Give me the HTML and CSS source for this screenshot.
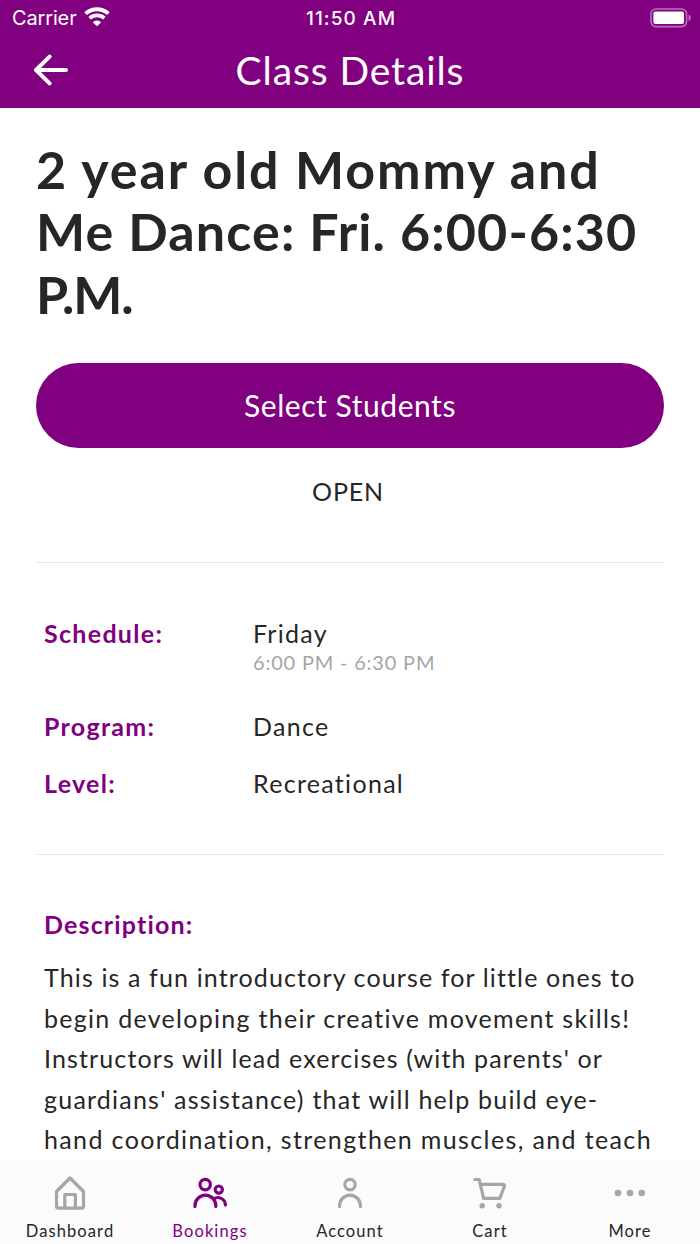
FILE: index.html
```html
<!DOCTYPE html>
<html lang="en">
  <head>
    <meta charset="UTF-8" />
    <meta name="viewport" content="width=device-width, initial-scale=1.0" />
    <title>Class Details</title>
    <link rel="stylesheet" href="styles.css">
  </head>
  <body>
    <header class="header">
      <div class="status-bar">
        <div class="carrier">
          <span>Carrier</span>
          <svg class="wifi" width="26" height="20" viewBox="0 0 26 20" fill="none" stroke="#fff">
            <path d="M1.6 6.6a16.8 16.8 0 0 1 22.8 0" stroke-width="4" />
            <path d="M5.6 11.2a11 11 0 0 1 14.8 0" stroke-width="3.6" />
            <path d="M13 19.2l-4.2-4a6 6 0 0 1 8.4 0z" fill="#fff" stroke="none" />
          </svg>
        </div>
        <div class="time">11:50 AM</div>
        <svg class="battery" width="42" height="20" viewBox="0 0 42 20">
          <rect x="1" y="1" width="35.6" height="17.6" rx="5" fill="none" stroke="#fff" stroke-opacity=".45" stroke-width="1.6" />
          <rect x="3.4" y="3.6" width="30.6" height="12.4" rx="2" fill="#fff" />
          <path d="M38.6 6.6c2.8 1.2 2.8 5.4 0 6.6z" fill="#fff" fill-opacity=".5" />
        </svg>
      </div>
      <div class="nav-bar">
        <a href="#" class="back" aria-label="Back">
          <svg width="38" height="32" viewBox="0 0 38 32" fill="none" stroke="#fff" stroke-width="4" stroke-linecap="round" stroke-linejoin="round">
            <path d="M17.6 2.6L4 16l13.6 13.4M4 16h30" />
          </svg>
        </a>
        <div class="nav-title">Class Details</div>
      </div>
    </header>

    <main class="content">
      <h1>
        <span class="title-name">2 year old Mommy and</span>
        <span class="title-time">Me Dance: Fri. 6:00-6:30</span>
        <span class="title-end">P.M.</span>
      </h1>
      <button class="select-button">Select Students</button>
      <div class="status">OPEN</div>

      <dl class="details">
        <div class="row row-schedule">
          <dt>Schedule:</dt>
          <dd>Friday<span class="hours">6:00 PM - 6:30 PM</span></dd>
        </div>
        <div class="row">
          <dt>Program:</dt>
          <dd>Dance</dd>
        </div>
        <div class="row">
          <dt>Level:</dt>
          <dd>Recreational</dd>
        </div>
      </dl>

      <section class="description">
        <h2>Description:</h2>
        <p>
          This is a fun introductory course for little ones to<br>
          <span class="wide">begin developing their creative movement skills!</span><br>
          Instructors will lead exercises (with parents' or<br>
          <span class="medium">guardians' assistance) that will help build eye-</span><br>
          <span class="wider">hand coordination, strengthen muscles, and teach</span>
        </p>
      </section>
    </main>

    <nav class="tab-bar">
      <a href="#" class="tab">
        <svg width="40" height="40" viewBox="0 0 40 40">
          <path d="M6.5 16.5L20 3l13.500 13.500V31.200a2 2 0 0 1-2 2H8.500a2 2 0 0 1-2-2zM14.800 33V19.500h10.600V33" />
        </svg>
        <span>Dashboard</span>
      </a>
      <a href="#" class="tab active">
        <svg width="40" height="40" viewBox="0 0 40 40">
          <circle cx="15.200" cy="9.600" r="5.200" />
          <circle cx="28.800" cy="14.600" r="3.600" />
          <path d="M5 31.600v-1a10.400 10.400 0 0 1 20.800 0v1M23.400 24.200a7.400 7.400 0 0 1 12 5.800" />
        </svg>
        <span>Bookings</span>
      </a>
      <a href="#" class="tab">
        <svg width="40" height="40" viewBox="0 0 40 40">
          <circle cx="20" cy="9.600" r="5.200" />
          <path d="M9.600 31.600v-1a10.400 10.400 0 0 1 20.800 0v1" />
        </svg>
        <span>Account</span>
      </a>
      <a href="#" class="tab">
        <svg width="40" height="40" viewBox="0 0 40 40">
          <path d="M4.800 4.500h4.400L13.600 23.400h16.200L34.400 11.400q.6-2-1.600-2H10.400" />
          <circle class="dot" cx="12.200" cy="30.800" r="2.700" />
          <circle class="dot" cx="29" cy="30.800" r="2.700" />
        </svg>
        <span>Cart</span>
      </a>
      <a href="#" class="tab">
        <svg width="40" height="40" viewBox="0 0 40 40">
          <circle class="dot" cx="8" cy="18" r="3.300" />
          <circle class="dot" cx="20" cy="18" r="3.300" />
          <circle class="dot" cx="31.700" cy="18" r="3.300" />
        </svg>
        <span>More</span>
      </a>
    </nav>
  </body>
</html>
```

FILE: styles.css
```css
* {
  box-sizing: border-box;
}
body {
  display: flex;
  flex-direction: column;
  height: 1244px;
  margin: 0;
  overflow: hidden;
  font-family: Lato, sans-serif;
  color: #262626;
  background: #fff;
}
svg {
  display: block;
}
.header {
  flex: none;
  height: 108px;
  background: #800080;
  color: #fff;
}
.status-bar {
  display: grid;
  grid-template-columns: 1fr auto 1fr;
  align-items: center;
  height: 36px;
  padding: 0 8px 0 12px;
  font-family: Inter, sans-serif;
  font-size: 20px;
}
.carrier {
  display: flex;
  align-items: center;
  gap: 7px;
  letter-spacing: -0.15px;
}
.wifi {
  margin-top: -3px;
}
.time {
  padding-right: 2px;
  font-size: 19px;
  font-weight: 500;
  letter-spacing: 1.1px;
}
.battery {
  justify-self: end;
  margin-top: -1px;
}
.nav-bar {
  display: grid;
  grid-template-columns: 38px 1fr 38px;
  align-items: center;
  height: 68px;
  padding: 0 32px;
}
.nav-title {
  font-size: 39px;
  letter-spacing: 0.9px;
  text-align: center;
}
.content {
  flex: 1;
  min-height: 0;
  padding: 30px 36px 0;
  overflow: hidden;
}
h1 {
  margin: 0;
  font-size: 52px;
  font-weight: 700;
  line-height: 62.4px;
  white-space: nowrap;
}
h1 span {
  display: block;
}
.title-name {
  letter-spacing: 1.9px;
}
.title-time {
  letter-spacing: 1.15px;
}
.title-end {
  letter-spacing: -1.2px;
}
.select-button {
  display: block;
  width: 100%;
  height: 85px;
  margin-top: 38px;
  padding: 0 0 2px;
  border: none;
  border-radius: 43px;
  background: #800080;
  color: #fff;
  font-family: inherit;
  font-size: 30px;
  letter-spacing: 0.55px;
}
.status {
  margin-top: 27px;
  padding-right: 4px;
  font-size: 25px;
  line-height: 32px;
  letter-spacing: 0.8px;
  text-align: center;
}
.details {
  margin: 55px 0 0;
  padding: 55px 8px 56px;
  border-top: 1px solid #e6e6e6;
  border-bottom: 1px solid #e6e6e6;
}
.row {
  display: grid;
  grid-template-columns: 209px 1fr;
  font-size: 25px;
  line-height: 30px;
  letter-spacing: 1.3px;
}
.row + .row {
  margin-top: 27.5px;
}
.row-schedule {
  height: 65px;
}
dt,
h2 {
  color: #800080;
  font-weight: 700;
}
dd {
  margin: 0;
}
.hours {
  display: block;
  margin-top: -1px;
  font-size: 20px;
  letter-spacing: 0.8px;
  color: #a6a6a6;
}
.description {
  padding: 54px 8px 0;
}
h2 {
  margin: 0;
  font-size: 25px;
  line-height: 30px;
  letter-spacing: 1.15px;
}
p {
  margin: 18px 0 0;
  font-size: 25px;
  line-height: 40.5px;
  letter-spacing: 1.13px;
  white-space: nowrap;
}
.medium {
  letter-spacing: 1.22px;
}
.wide {
  letter-spacing: 1.28px;
}
.wider {
  letter-spacing: 1.37px;
}
.tab-bar {
  display: grid;
  grid-template-columns: repeat(5, 1fr);
  flex: none;
  height: 84px;
  padding-top: 15px;
  background: #fbfbfb;
}
.tab {
  display: flex;
  flex-direction: column;
  align-items: center;
  color: #262626;
  font-size: 16.5px;
  line-height: 20px;
  letter-spacing: 1.1px;
  text-decoration: none;
}
.tab svg {
  margin-bottom: 6px;
  fill: none;
  stroke: #a6a6a6;
  stroke-width: 3.2;
  stroke-linecap: round;
  stroke-linejoin: round;
}
.tab .dot {
  fill: #a6a6a6;
  stroke: none;
}
.tab.active {
  color: #800080;
}
.tab.active svg {
  stroke: #800080;
}
```
